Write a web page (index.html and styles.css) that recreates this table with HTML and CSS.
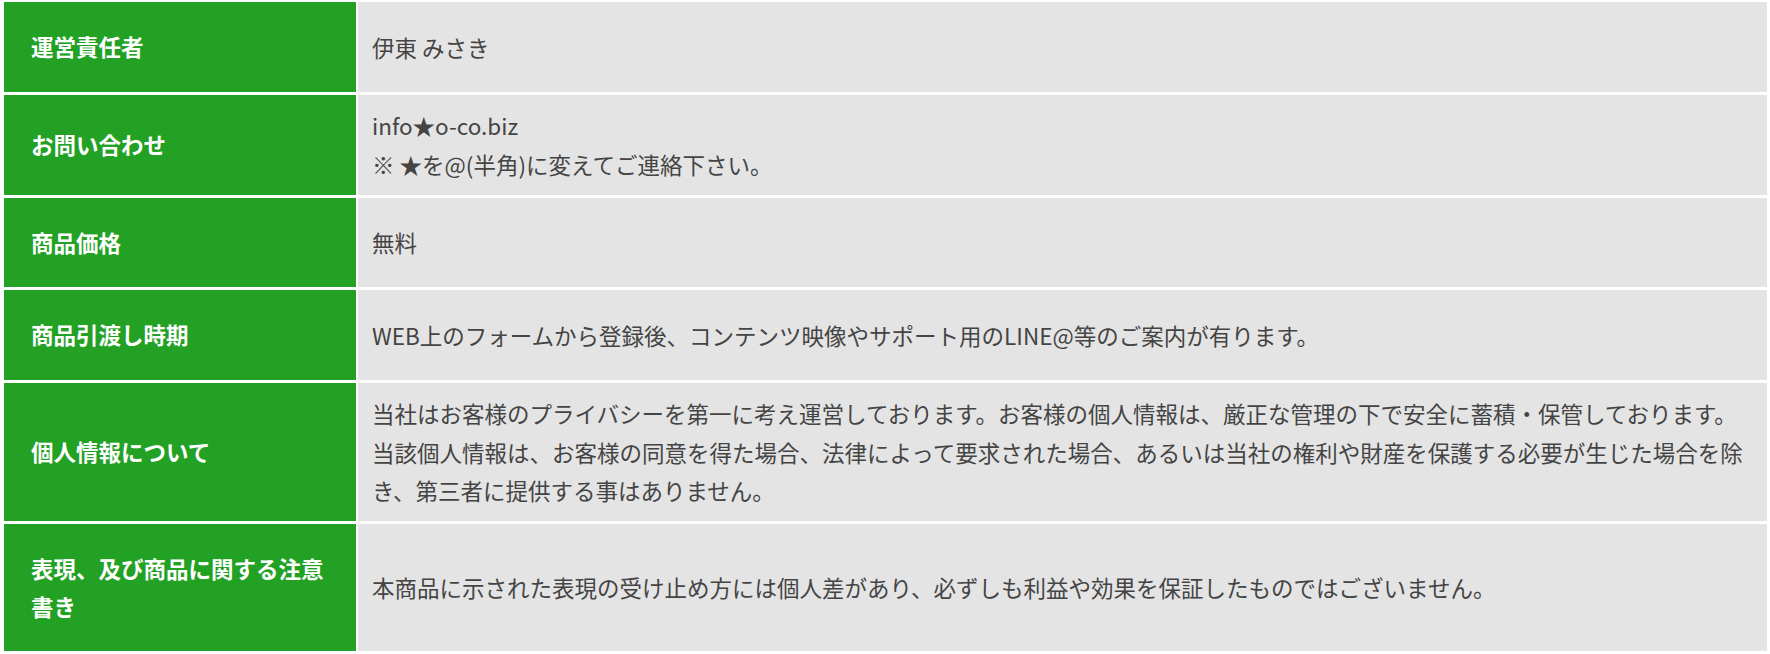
FILE: index.html
```
<!DOCTYPE html>
<html lang="ja">
<head>
<meta charset="utf-8">
<title>特定商取引法に基づく表記</title>
<link rel="stylesheet" href="styles.css">
</head>
<body>
<table class="info-table">
  <tbody>
    <tr>
      <th class="label">運営責任者</th>
      <td class="value">伊東 みさき</td>
    </tr>
    <tr>
      <th class="label">お問い合わせ</th>
      <td class="value">info★o-co.biz<br>※ ★を@(半角)に変えてご連絡下さい。</td>
    </tr>
    <tr>
      <th class="label">商品価格</th>
      <td class="value">無料</td>
    </tr>
    <tr>
      <th class="label">商品引渡し時期</th>
      <td class="value">WEB上のフォームから登録後、コンテンツ映像やサポート用のLINE@等のご案内が有ります。</td>
    </tr>
    <tr>
      <th class="label">個人情報について</th>
      <td class="value">当社はお客様のプライバシーを第一に考え運営しております。お客様の個人情報は、厳正な管理の下で安全に蓄積・保管しております。当該個人情報は、お客様の同意を得た場合、法律によって要求された場合、あるいは当社の権利や財産を保護する必要が生じた場合を除き、第三者に提供する事はありません。</td>
    </tr>
    <tr>
      <th class="label">表現、及び商品に関する注意書き</th>
      <td class="value">本商品に示された表現の受け止め方には個人差があり、必ずしも利益や効果を保証したものではございません。</td>
    </tr>
  </tbody>
</table>
</body>
</html>
```
FILE: styles.css
```
html, body {
  margin: 0;
  padding: 0;
  background: #ffffff;
}

body {
  font-family: "Noto Sans CJK JP", "Noto Sans", sans-serif;
}

.info-table {
  margin-left: 2px;
  width: 1767px;
  border-collapse: separate;
  border-spacing: 2px 3px;
  margin-top: -1px;
  table-layout: fixed;
}

.label {
  box-sizing: border-box;
  width: 352px;
  background: #22a124;
  color: #ffffff;
  font-weight: bold;
  font-size: 22.5px;
  line-height: 37.5px;
  padding: 26px 27px;
  text-align: left;
  vertical-align: middle;
}

.value {
  background: #e4e4e4;
  color: #444444;
  font-size: 22.5px;
  line-height: 38.5px;
  padding: 11.5px 14px;
  vertical-align: middle;
  word-break: break-all;
}
```
